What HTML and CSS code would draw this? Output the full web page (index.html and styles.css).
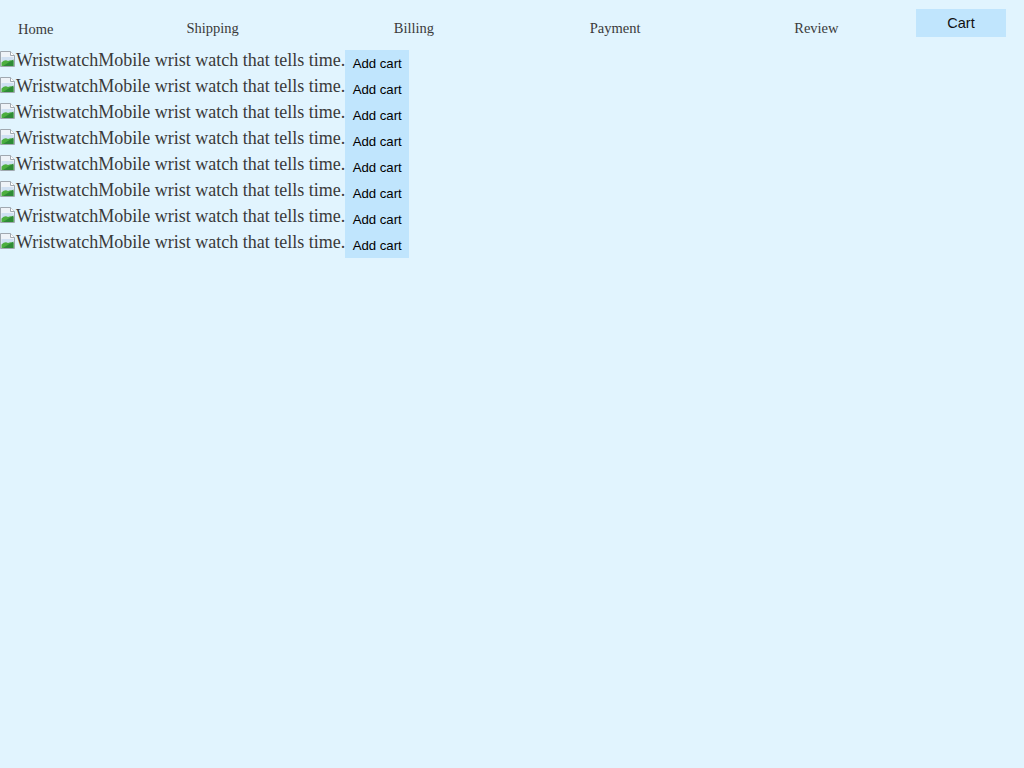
FILE: index.html
```html
<!DOCTYPE html>
<html>
<head>
<meta charset="utf-8">
<link rel="stylesheet" href="styles.css">
</head>
<body>
<nav class="nav">
  <a class="nav-home">Home</a>
  <a class="nav-link">Shipping</a>
  <a class="nav-link">Billing</a>
  <a class="nav-link">Payment</a>
  <a class="nav-link">Review</a>
  <button class="cart-btn">Cart</button>
</nav>
<ul class="list">
  <li class="item"><span class="alt"><svg class="broken" width="16" height="16" viewBox="0 0 16 16"><path d="M0.5 0.5H10.5L14.5 4.5V15.5H0.5Z" fill="#eef3f8" stroke="#a0a8b0"/><path d="M10.5 0.5V4.5H14.5" fill="#fff" stroke="#a0a8b0"/><path d="M1.5 6h12v9h-12z" fill="#cfe0f2"/><path d="M1.5 15V11.5Q5 8 8 10Q11 8.5 13.5 10V15Z" fill="#4caf3f"/><path d="M3 15L13.5 8.5V15Z" fill="#2e8b36"/></svg>WristwatchMobile wrist watch that tells time.</span><button class="add-btn">Add cart</button></li>
  <li class="item"><span class="alt"><svg class="broken" width="16" height="16" viewBox="0 0 16 16"><path d="M0.5 0.5H10.5L14.5 4.5V15.5H0.5Z" fill="#eef3f8" stroke="#a0a8b0"/><path d="M10.5 0.5V4.5H14.5" fill="#fff" stroke="#a0a8b0"/><path d="M1.5 6h12v9h-12z" fill="#cfe0f2"/><path d="M1.5 15V11.5Q5 8 8 10Q11 8.5 13.5 10V15Z" fill="#4caf3f"/><path d="M3 15L13.5 8.5V15Z" fill="#2e8b36"/></svg>WristwatchMobile wrist watch that tells time.</span><button class="add-btn">Add cart</button></li>
  <li class="item"><span class="alt"><svg class="broken" width="16" height="16" viewBox="0 0 16 16"><path d="M0.5 0.5H10.5L14.5 4.5V15.5H0.5Z" fill="#eef3f8" stroke="#a0a8b0"/><path d="M10.5 0.5V4.5H14.5" fill="#fff" stroke="#a0a8b0"/><path d="M1.5 6h12v9h-12z" fill="#cfe0f2"/><path d="M1.5 15V11.5Q5 8 8 10Q11 8.5 13.5 10V15Z" fill="#4caf3f"/><path d="M3 15L13.5 8.5V15Z" fill="#2e8b36"/></svg>WristwatchMobile wrist watch that tells time.</span><button class="add-btn">Add cart</button></li>
  <li class="item"><span class="alt"><svg class="broken" width="16" height="16" viewBox="0 0 16 16"><path d="M0.5 0.5H10.5L14.5 4.5V15.5H0.5Z" fill="#eef3f8" stroke="#a0a8b0"/><path d="M10.5 0.5V4.5H14.5" fill="#fff" stroke="#a0a8b0"/><path d="M1.5 6h12v9h-12z" fill="#cfe0f2"/><path d="M1.5 15V11.5Q5 8 8 10Q11 8.5 13.5 10V15Z" fill="#4caf3f"/><path d="M3 15L13.5 8.5V15Z" fill="#2e8b36"/></svg>WristwatchMobile wrist watch that tells time.</span><button class="add-btn">Add cart</button></li>
  <li class="item"><span class="alt"><svg class="broken" width="16" height="16" viewBox="0 0 16 16"><path d="M0.5 0.5H10.5L14.5 4.5V15.5H0.5Z" fill="#eef3f8" stroke="#a0a8b0"/><path d="M10.5 0.5V4.5H14.5" fill="#fff" stroke="#a0a8b0"/><path d="M1.5 6h12v9h-12z" fill="#cfe0f2"/><path d="M1.5 15V11.5Q5 8 8 10Q11 8.5 13.5 10V15Z" fill="#4caf3f"/><path d="M3 15L13.5 8.5V15Z" fill="#2e8b36"/></svg>WristwatchMobile wrist watch that tells time.</span><button class="add-btn">Add cart</button></li>
  <li class="item"><span class="alt"><svg class="broken" width="16" height="16" viewBox="0 0 16 16"><path d="M0.5 0.5H10.5L14.5 4.5V15.5H0.5Z" fill="#eef3f8" stroke="#a0a8b0"/><path d="M10.5 0.5V4.5H14.5" fill="#fff" stroke="#a0a8b0"/><path d="M1.5 6h12v9h-12z" fill="#cfe0f2"/><path d="M1.5 15V11.5Q5 8 8 10Q11 8.5 13.5 10V15Z" fill="#4caf3f"/><path d="M3 15L13.5 8.5V15Z" fill="#2e8b36"/></svg>WristwatchMobile wrist watch that tells time.</span><button class="add-btn">Add cart</button></li>
  <li class="item"><span class="alt"><svg class="broken" width="16" height="16" viewBox="0 0 16 16"><path d="M0.5 0.5H10.5L14.5 4.5V15.5H0.5Z" fill="#eef3f8" stroke="#a0a8b0"/><path d="M10.5 0.5V4.5H14.5" fill="#fff" stroke="#a0a8b0"/><path d="M1.5 6h12v9h-12z" fill="#cfe0f2"/><path d="M1.5 15V11.5Q5 8 8 10Q11 8.5 13.5 10V15Z" fill="#4caf3f"/><path d="M3 15L13.5 8.5V15Z" fill="#2e8b36"/></svg>WristwatchMobile wrist watch that tells time.</span><button class="add-btn">Add cart</button></li>
  <li class="item"><span class="alt"><svg class="broken" width="16" height="16" viewBox="0 0 16 16"><path d="M0.5 0.5H10.5L14.5 4.5V15.5H0.5Z" fill="#eef3f8" stroke="#a0a8b0"/><path d="M10.5 0.5V4.5H14.5" fill="#fff" stroke="#a0a8b0"/><path d="M1.5 6h12v9h-12z" fill="#cfe0f2"/><path d="M1.5 15V11.5Q5 8 8 10Q11 8.5 13.5 10V15Z" fill="#4caf3f"/><path d="M3 15L13.5 8.5V15Z" fill="#2e8b36"/></svg>WristwatchMobile wrist watch that tells time.</span><button class="add-btn">Add cart</button></li>
</ul>
</body>
</html>
```

FILE: styles.css
```css
html, body {
  margin: 0;
  padding: 0;
  background: #e1f4fe;
}
body {
  font-family: "Liberation Serif", "Times New Roman", serif;
  color: #3a3a3a;
  height: 768px;
}
.nav {
  display: flex;
  align-items: flex-start;
  height: 50px;
}
.nav-home {
  width: 93px;
  padding-left: 18px;
  padding-top: 21px;
  font-size: 14.5px;
  line-height: 17px;
}
.nav-link {
  flex: 1;
  text-align: center;
  padding-top: 20px;
  padding-left: 2px;
  font-size: 14.5px;
  line-height: 17px;
}
.cart-btn {
  width: 90px;
  height: 28px;
  margin-top: 9px;
  margin-right: 18px;
  border: none;
  background: #c0e5fd;
  font-family: "Liberation Sans", Arial, sans-serif;
  font-size: 14.5px;
  color: #111;
  padding: 0 0 1px 0;
  line-height: 26px;
}
.list {
  list-style: none;
  margin: 0;
  padding: 0;
}
.item {
  display: flex;
  align-items: stretch;
  height: 26px;
}
.alt {
  display: flex;
  align-items: flex-start;
  font-size: 18px;
  line-height: 20px;
  white-space: nowrap;
}
.broken {
  margin-top: 1px;
  flex: none;
}
.add-btn {
  border: none;
  background: #c0e5fd;
  font-family: "Liberation Sans", Arial, sans-serif;
  font-size: 13.2px;
  color: #000;
  width: 64px;
  padding: 2px 0 0 0;
  height: 26px;
  line-height: 18px;
  text-align: center;
}
```
